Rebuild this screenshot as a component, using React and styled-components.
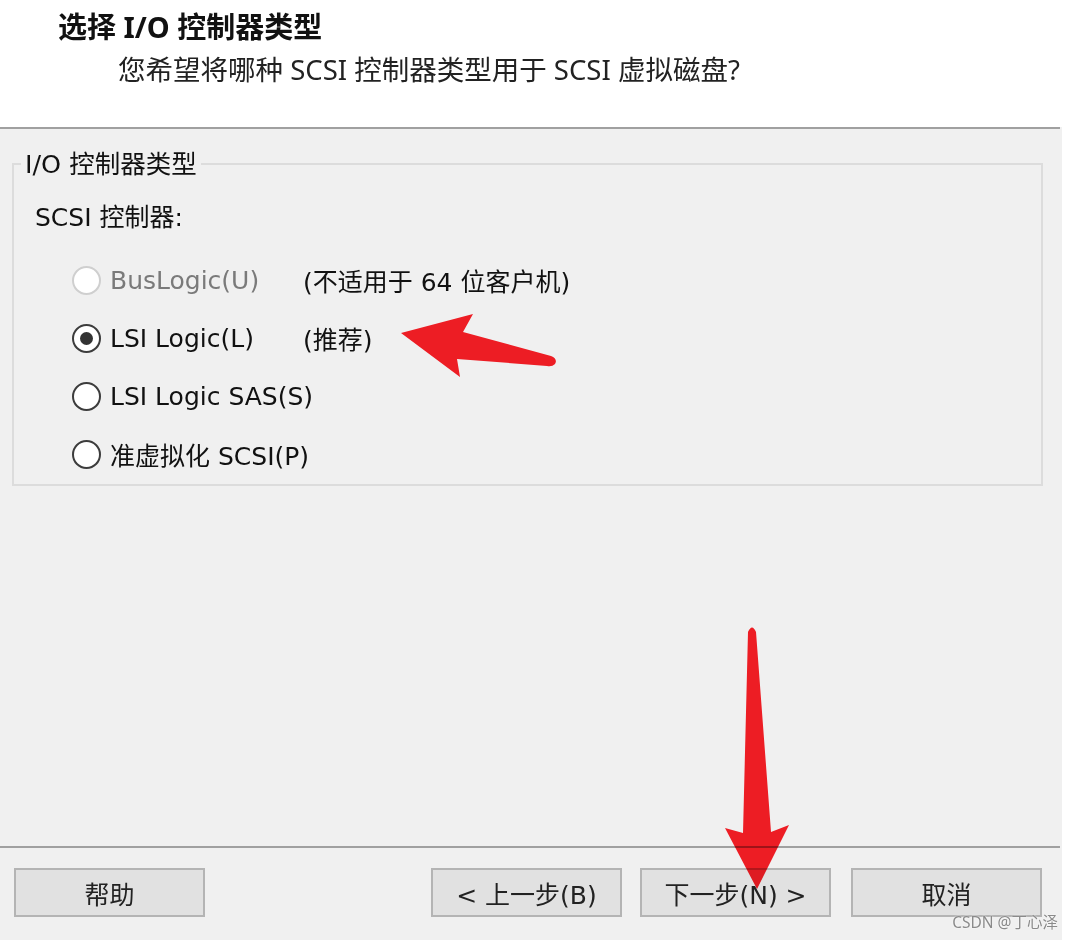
import styled, { createGlobalStyle } from "styled-components";

const GlobalStyle = createGlobalStyle`
  * {
    box-sizing: border-box;
  }
  body {
    margin: 0;
    background: #ffffff;
    font-family: "DejaVu Sans", "Noto Sans CJK SC", sans-serif;
    color: #111;
  }
`;

const Page = styled.div`
  position: relative;
  width: 1071px;
  height: 940px;
  display: flex;
  overflow: hidden;
`;

const Window = styled.div`
  width: 1062px;
  height: 940px;
  display: flex;
  flex-direction: column;
  background: #f0f0f0;
`;

const Header = styled.header`
  height: 127px;
  background: #ffffff;
  padding-left: 58px;
  font-family: "Noto Sans", "Noto Sans CJK SC", sans-serif;
`;

const Title = styled.h1`
  margin: 11px 0 0;
  font-size: 29px;
  font-weight: 700;
  line-height: 32px;
  color: #111;
`;

const Subtitle = styled.p`
  margin: 11px 0 0 60px;
  font-size: 27.5px;
  line-height: 32px;
  color: #222;
`;

const Rule = styled.div`
  height: 2px;
  width: 1060px;
  background: #a0a0a0;
`;

const Body = styled.main`
  height: 717px;
  padding: 19px 19px 0 12px;
`;

const Group = styled.fieldset`
  margin: 0;
  padding: 0 0 1px;
  width: 1031px;
  border: 2px solid #dcdcdc;
`;

const Legend = styled.legend`
  margin-left: 7px;
  padding: 0 4px;
  font-size: 25.5px;
  line-height: 32px;
`;

const Heading = styled.div`
  margin: 22px 0 0 21px;
  font-size: 25px;
  line-height: 32px;
`;

const Options = styled.div`
  margin: 17px 0 0 58px;
  display: flex;
  flex-direction: column;
`;

const Row = styled.label`
  height: 58px;
  display: flex;
  align-items: center;
  white-space: nowrap;
  font-size: 25px;
  color: ${(p) => (p.disabled ? "#7a7a7a" : "#111")};
`;

const Radio = styled.span`
  width: 29px;
  height: 29px;
  flex-shrink: 0;
  border-radius: 50%;
  background: #ffffff;
  border: 2px solid ${(p) => (p.disabled ? "#cfcfcf" : "#3c3c3c")};
  display: flex;
  align-items: center;
  justify-content: center;
  margin-right: 9px;

  &::after {
    content: "";
    width: 13px;
    height: 13px;
    border-radius: 50%;
    background: ${(p) => (p.checked ? "#333" : "transparent")};
  }
`;

const OptionName = styled.span`
  min-width: 193px;
`;

const Note = styled.span`
  color: #111;
`;

const Footer = styled.footer`
  flex: 1;
  display: flex;
  align-items: flex-start;
  padding: 20px 20px 0 14px;
`;

const NavGroup = styled.div`
  margin-left: auto;
  display: flex;
`;

const Button = styled.button`
  width: 191px;
  height: 49px;
  margin-left: ${(p) => p.gap || 0}px;
  background: #e1e1e1;
  border: 2px solid #b4b4b4;
  border-radius: 0;
  font-family: "DejaVu Sans", "Noto Sans CJK SC", sans-serif;
  font-size: 25px;
  color: #222;
  padding: 0;
`;

const Watermark = styled.div`
  position: absolute;
  right: 13px;
  bottom: 7px;
  font-family: "Noto Sans", "Noto Sans CJK SC", sans-serif;
  font-size: 15.5px;
  color: #8a8a8a;
  text-shadow: 0 0 2px #fff;
`;

const Marks = styled.svg`
  position: absolute;
  left: 0;
  top: 0;
  pointer-events: none;
  mix-blend-mode: multiply;
`;

const options = [
  { name: "BusLogic(U)", note: "(不适用于 64 位客户机)", disabled: true },
  { name: "LSI Logic(L)", note: "(推荐)", checked: true },
  { name: "LSI Logic SAS(S)" },
  { name: "准虚拟化 SCSI(P)" },
];

export default function App() {
  return (
    <Page>
      <GlobalStyle />
      <Window>
        <Header>
          <Title>选择 I/O 控制器类型</Title>
          <Subtitle>您希望将哪种 SCSI 控制器类型用于 SCSI 虚拟磁盘?</Subtitle>
        </Header>
        <Rule />
        <Body>
          <Group>
            <Legend>I/O 控制器类型</Legend>
            <Heading>SCSI 控制器:</Heading>
            <Options>
              {options.map((o) => (
                <Row key={o.name} disabled={o.disabled}>
                  <Radio checked={o.checked} disabled={o.disabled} />
                  <OptionName>{o.name}</OptionName>
                  {o.note && <Note>{o.note}</Note>}
                </Row>
              ))}
            </Options>
          </Group>
        </Body>
        <Rule />
        <Footer>
          <Button>帮助</Button>
          <NavGroup>
            <Button>&lt; 上一步(B)</Button>
            <Button gap={18}>下一步(N) &gt;</Button>
            <Button gap={20}>取消</Button>
          </NavGroup>
        </Footer>
      </Window>
      <Marks width="1071" height="940" viewBox="0 0 1071 940">
        <path
          d="M401 333 L473 314 L463 332 L551 356 Q558 359 555 364 Q552 367 547 366 L457 359 L460 377 Z"
          fill="#fc1e26"
        />
        <path
          d="M748 632 Q752 623 756 632 L771 832 L789 825 L757 889 L725 828 L743 833 Z"
          fill="#fc1e26"
        />
      </Marks>
      <Watermark>CSDN @丁心泽</Watermark>
    </Page>
  );
}
